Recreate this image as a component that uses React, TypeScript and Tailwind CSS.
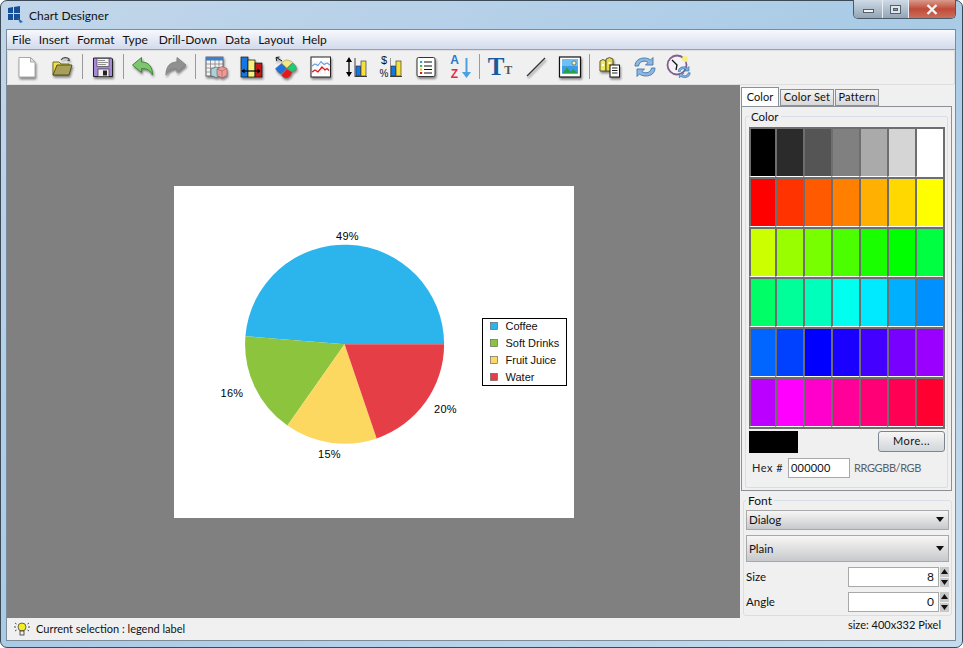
import React from "react";

const sans = "[font-family:'Lato','Open_Sans',sans-serif]";

const shadow = "drop-shadow-[1px_2px_1px_rgba(0,0,0,0.45)]";

function Ico({ children, cls = shadow }: { children: React.ReactNode; cls?: string }) {
  return (
    <svg width="24" height="24" viewBox="0 0 24 24" className={cls}>
      {children}
    </svg>
  );
}

const IconNew = () => (
  <Ico>
    <path d="M4 2.5h11.5l4.5 4.5v15H4z" fill="#fff" stroke="#a8a8a8" />
    <path d="M15.5 2.5v4.5h4.5z" fill="#e4e4e4" stroke="#a8a8a8" />
  </Ico>
);
const IconOpen = () => (
  <Ico>
    <path d="M3 7h6l2 2h8v11H3z" fill="#f5e04a" stroke="#6e6a20" />
    <path d="M3 20l4-10h15l-3 10z" fill="#a6a05a" stroke="#55521c" />
    <path d="M11 5c2-3 6-3 8-1" fill="none" stroke="#444" strokeWidth="1.2" />
    <path d="M20 6l-3-.2 2.4-2.4z" fill="#444" />
  </Ico>
);
const IconSave = () => (
  <Ico>
    <path d="M2.5 3h18l1 1v17.500h-19z" fill="#a888d8" stroke="#222" />
    <rect x="6" y="3.500" width="12" height="8" fill="#f4f4f4" stroke="#444" strokeWidth="0.7" />
    <path d="M7 5.500h7M7 7.500h10M7 9.500h8" stroke="#777" strokeWidth="0.8" />
    <rect x="7" y="14" width="11" height="7.500" fill="#f0f0f0" stroke="#333" strokeWidth="0.7" />
    <rect x="12" y="15.500" width="4" height="5" fill="#222" />
  </Ico>
);
const IconUndo = () => (
  <Ico>
    <path d="M1.500 10l9-7.500v4.500c7 0 11 4.500 11 13-2.500-5-5.500-6.500-11-6.500v4z" fill="#7fc46e" stroke="#3f8a3a" />
  </Ico>
);
const IconRedo = () => (
  <Ico>
    <path d="M22 10l-9-7.500v4.500c-7 0-11 4.500-11 13 2.500-5 5.500-6.500 11-6.500v4z" fill="#909090" stroke="#858585" />
  </Ico>
);
const IconTable = () => (
  <Ico>
    <rect x="2" y="2" width="17" height="19" fill="#f3f3f3" stroke="#666" />
    <rect x="2" y="2" width="17" height="3.500" fill="#3c7fd0" />
    <path d="M2 9h17M2 13h17M2 17h17M6.500 5v16M11 5v16M15 5v16" stroke="#777" strokeWidth="0.7" />
    <path d="M7 14l5-2 5 1.500v7l-5 2-5-2z" fill="#a8d4d4" stroke="#557" strokeWidth="0.6" />
    <path d="M13 14l5-2.500 5 2v7l-5 2.500-5-2.500z" fill="#ee9a9a" stroke="#855" strokeWidth="0.6" />
    <path d="M13 14l5 2 5-2.500M18 16v7.500" stroke="#855" strokeWidth="0.5" fill="none" />
  </Ico>
);
const IconBars = () => (
  <Ico>
    <rect x="2" y="2" width="7" height="20" fill="#1478e0" stroke="#111" strokeWidth="0.7" />
    <rect x="9" y="5" width="7" height="17" fill="#f5f080" stroke="#111" strokeWidth="0.7" />
    <rect x="16" y="8" width="7" height="14" fill="#c01818" stroke="#111" strokeWidth="0.7" />
    <path d="M3 16h18" stroke="#000" strokeWidth="1.200" />
    <path d="M2.500 16l3-2.500v5zM21.500 16l-3-2.500v5z" fill="#000" />
  </Ico>
);
const IconPie = () => (
  <Ico>
    <path d="M12 5c3 0 5 1 6.500 2.500L13 13l-1-.5L7.500 8 11 5.200z" fill="#f3e878" stroke="#666" strokeWidth="0.4" />
    <path d="M13.500 13.500L19 8c2.500 2 3.500 4 3.500 6l-4 3z" fill="#18d070" stroke="#666" strokeWidth="0.4" />
    <path d="M7.500 8.500L12.500 13.500 7 19c-3-1.500-5-4-5.500-5.500z" fill="#2070e0" stroke="#666" strokeWidth="0.4" />
    <path d="M13 14l5 3.500c-1.500 4-4 5.500-6 5.500s-3.500-1-4.500-3z" fill="#e81818" stroke="#666" strokeWidth="0.4" />
    <path d="M8 6L2.500 2.500M2 2.500l3.500-.5M2 2.500l.8 3.500" stroke="#111" strokeWidth="1" fill="none" />
  </Ico>
);
const IconLine = () => (
  <Ico>
    <rect x="2" y="2" width="19.500" height="20" fill="#fff" stroke="#222" />
    <path d="M4 6v13M8 6v13M12 6v13M16 6v13M20 6v13" stroke="#d8d8d8" strokeWidth="0.6" />
    <path d="M3 11l3-2 3 1.500 3-4 3 3 3-1.500 3 2" fill="none" stroke="#6aa0e0" strokeWidth="1.100" />
    <path d="M3 17l3-2 3 2 4-5 3 3 2-1.500 2 2" fill="none" stroke="#e01818" strokeWidth="1.300" />
  </Ico>
);
const IconAxis = () => (
  <Ico cls="">
    <path d="M5 5v14" stroke="#000" strokeWidth="1.300" />
    <path d="M5 2L2 7h6zM5 22l-3-5h6z" fill="#000" />
    <path d="M11 3v19M11 21.500h12" stroke="#444" strokeWidth="1" />
    <rect x="12" y="11" width="4.500" height="10" fill="#1478e0" stroke="#222" strokeWidth="0.6" />
    <rect x="17" y="6" width="5" height="15" fill="#f5e040" stroke="#222" strokeWidth="0.6" />
  </Ico>
);
const IconMoney = () => (
  <div className="w-[24px] h-[24px] flex items-center">
    <div className="w-[11px] flex flex-col items-center text-[#111] [font-family:'Liberation_Sans',sans-serif] text-[11px] leading-[13px]">
      <span>$</span>
      <span className="text-[10px]">%</span>
    </div>
    <svg width="13" height="24" viewBox="11 0 13 24">
      <path d="M11 3v19M11 21.500h12" stroke="#444" strokeWidth="1" />
      <rect x="12" y="11" width="4.500" height="10" fill="#1478e0" stroke="#222" strokeWidth="0.6" />
      <rect x="17" y="6" width="5" height="15" fill="#f5e040" stroke="#222" strokeWidth="0.6" />
    </svg>
  </div>
);
const IconList = () => (
  <Ico>
    <rect x="3" y="2.500" width="18" height="19" rx="1.500" fill="#fff" stroke="#333" />
    <rect x="6" y="6" width="2.200" height="2" fill="#2ea0d8" />
    <rect x="6" y="10" width="2.200" height="2" fill="#48b048" />
    <rect x="6" y="13.500" width="2.200" height="2" fill="#e8c020" />
    <rect x="6" y="17" width="2.200" height="2" fill="#d02020" />
    <path d="M10 7h8M10 11h8M10 14.500h8M10 18h8" stroke="#111" strokeWidth="1.200" />
  </Ico>
);
const IconAZ = () => (
  <div className="w-[24px] h-[24px] flex items-center">
    <div className="w-[14px] flex flex-col items-center font-bold text-[12px] leading-[14px] [font-family:'Liberation_Sans',sans-serif]">
      <span className="text-[#2a78c8]">A</span>
      <span className="text-[#e82848]">Z</span>
    </div>
    <svg width="10" height="24" viewBox="14 0 10 24">
      <path d="M18.500 3v16" stroke="#4aa0e0" strokeWidth="2" />
      <path d="M18.500 23l-4.500-6h9z" fill="#4aa0e0" />
    </svg>
  </div>
);
const IconText = () => (
  <div className="flex items-end h-[24px] font-bold [font-family:'Liberation_Serif',serif]">
    <span className="text-[25px] leading-[24px] text-[#1a5a9c]">T</span>
    <span className="text-[12px] leading-[14px] text-[#555] mb-[2px]">T</span>
  </div>
);
const IconStroke = () => (
  <Ico>
    <path d="M3 21L21 3" stroke="#333" strokeWidth="1.300" />
  </Ico>
);
const IconImage = () => (
  <Ico>
    <rect x="1.500" y="2" width="21" height="20" fill="#fff" stroke="#111" strokeWidth="1.200" />
    <rect x="4" y="4" width="16" height="14.500" fill="#3c9ce8" />
    <rect x="4" y="4" width="16" height="7" fill="#6cc0f4" />
    <circle cx="16" cy="8" r="2" fill="#f8f4c0" stroke="#333" strokeWidth="0.5" />
    <path d="M4 18.500l5-6 3.500 4 2.500-2.500 5 4.500z" fill="#28a048" />
  </Ico>
);
const IconData = () => (
  <Ico>
    <path d="M2 6l3-1.500L8 6v10H2z" fill="#f0e860" stroke="#333" strokeWidth="0.8" />
    <path d="M8 4l3.500-1.500L15 4v12H8z" fill="#e8d848" stroke="#333" strokeWidth="0.8" />
    <rect x="4" y="9" width="2" height="2" fill="#fff" />
    <rect x="10.500" y="7" width="2" height="2" fill="#fff" />
    <rect x="12" y="10" width="9.500" height="12" fill="#fff" stroke="#111" />
    <path d="M14 13h5.500M14 15.500h5.500M14 18h5.500" stroke="#222" strokeWidth="1" />
  </Ico>
);
const IconRefresh = () => (
  <svg width="24" height="24" viewBox="0 0 24 24">
    <path d="M2 11c0-5 4-8 9-8 3 0 5 .8 6.500 2L20 2.500V10h-7.500l2.500-2.500c-1-1-2.500-1.300-4-1.300-3 0-5 2-5.500 4.800z" fill="#8fb6dc" stroke="#3f78b0" strokeWidth="0.9" />
    <path d="M22 13c0 5-4 8-9 8-3 0-5-.8-6.500-2L4 21.500V14h7.500L9 16.500c1 1 2.500 1.300 4 1.300 3 0 5-2 5.500-4.800z" fill="#8fb6dc" stroke="#3f78b0" strokeWidth="0.9" />
  </svg>
);
const IconClock = () => (
  <svg width="26" height="26" viewBox="0 0 26 26">
    <circle cx="11" cy="11" r="9.500" fill="#f4f2f6" stroke="#80608c" strokeWidth="1.800" />
    <path d="M6 6l5 5-1 5" fill="none" stroke="#111" strokeWidth="1.300" />
    <circle cx="19" cy="5" r="3" fill="#f4f080" />
    <g transform="translate(11 11) scale(0.6)">
      <path d="M2 11c0-5 4-8 9-8 3 0 5 .8 6.500 2L20 2.500V10h-7.500l2.500-2.500c-1-1-2.500-1.300-4-1.300-3 0-5 2-5.500 4.800z" fill="#7fb0dc" stroke="#2f6aa8" />
      <path d="M22 13c0 5-4 8-9 8-3 0-5-.8-6.500-2L4 21.500V14h7.500L9 16.500c1 1 2.500 1.300 4 1.300 3 0 5-2 5.500-4.800z" fill="#7fb0dc" stroke="#2f6aa8" />
    </g>
  </svg>
);

function Btn({ w = "w-[35px]", children }: { w?: string; children: React.ReactNode }) {
  return <div className={`${w} h-full flex items-center justify-center shrink-0`}>{children}</div>;
}
const Sep = () => (
  <div className="w-[6px] h-full flex items-center justify-center shrink-0">
    <div className="w-px h-[25px] bg-[#9a9a9a]" />
  </div>
);

const rows = [
  ["#000000", "#2b2b2b", "#555555", "#808080", "#aaaaaa", "#d5d5d5", "#ffffff"],
  ["#ff0000", "#ff3300", "#ff5a00", "#ff8000", "#ffb000", "#ffd800", "#ffff00"],
  ["#ccff00", "#99ff00", "#77ff00", "#4cff00", "#1aff00", "#00ff00", "#00ff40"],
  ["#00ff66", "#00ff99", "#00ffbb", "#00ffee", "#00eaff", "#00b0ff", "#0090ff"],
  ["#0066ff", "#0040ff", "#0000ff", "#1a00ff", "#4400ff", "#7700ff", "#9900ff"],
  ["#bb00ff", "#ff00ff", "#ff00cc", "#ff0099", "#ff0077", "#ff0055", "#ff0030"],
];

const legend = [
  { c: "#2cb5ec", t: "Coffee", y: 140 },
  { c: "#8cc43e", t: "Soft Drinks", y: 157 },
  { c: "#fdd860", t: "Fruit Juice", y: 174 },
  { c: "#e53e46", t: "Water", y: 191 },
];

function pt(deg: number) {
  const r = 99.5;
  const a = (deg * Math.PI) / 180;
  return `${170.6 + r * Math.cos(a)} ${158.2 - r * Math.sin(a)}`;
}
function slice(a: number, b: number) {
  return `M170.6 158.200L${pt(a)}A99.500 99.500 0 ${b - a > 180 ? 1 : 0} 0 ${pt(b)}Z`;
}

function Chart() {
  const font = { fontFamily: "Liberation Sans", fontSize: 11 };
  return (
    <div className="w-[400px] h-[332px] bg-white shrink-0">
      <svg width="400" height="332" viewBox="0 0 400 332">
        <path d={slice(0, 175.4)} fill="#2cb5ec" />
        <path d={slice(175.4, 234.9)} fill="#8cc43e" />
        <path d={slice(234.9, 288.8)} fill="#fdd860" />
        <path d={slice(288.8, 360)} fill="#e53e46" />
        <text x="173.500" y="54" textAnchor="middle" letterSpacing="0.3" {...font}>49%</text>
        <text x="58" y="211" textAnchor="middle" letterSpacing="0.3" {...font}>16%</text>
        <text x="271.500" y="227" textAnchor="middle" letterSpacing="0.3" {...font}>20%</text>
        <text x="155.500" y="272" textAnchor="middle" letterSpacing="0.3" {...font}>15%</text>
        <rect x="308.500" y="132.500" width="84" height="67" fill="#fff" stroke="#000" />
        {legend.map((l) => (
          <g key={l.t}>
            <rect x="316.500" y={l.y - 3.5} width="7" height="7" fill={l.c} stroke="#555" strokeWidth="0.6" />
            <text x="331.500" y={l.y + 4} fill="#111" {...font}>{l.t}</text>
          </g>
        ))}
      </svg>
    </div>
  );
}

function Combo({ label, h }: { label: string; h: string }) {
  return (
    <div className={`${h} w-[203px] mx-[2px] border border-[#a8a8a8] bg-gradient-to-b from-[#f6f6f6] via-[#e0e0e0] to-[#c6c9cc] flex items-center justify-between px-[2px] text-[11.500px] text-[#111]`}>
      <span>{label}</span>
      <svg width="10" height="6" viewBox="0 0 10 6" className="mr-[1px]"><path d="M1 0h8L5 5z" fill="#111" /></svg>
    </div>
  );
}

function Spin({ label, value }: { label: string; value: string }) {
  return (
    <div className="flex items-center h-[20px] text-[11.500px] text-[#111]">
      <span className="w-[102px]">{label}</span>
      <div className="w-[91px] h-[20px] bg-white border border-[#a8a8a8] flex items-center justify-end pr-[4px] text-[12px]">{value}</div>
      <div className="w-[9px] ml-[1px] h-[20px] flex flex-col gap-px">
        <div className="flex-1 bg-[#c8c8c8] flex items-center justify-center">
          <svg width="7" height="5" viewBox="0 0 7 5"><path d="M3.500 0L7 5H0z" fill="#111" /></svg>
        </div>
        <div className="flex-1 bg-[#c8c8c8] flex items-center justify-center">
          <svg width="7" height="5" viewBox="0 0 7 5"><path d="M0 0h7L3.500 5z" fill="#111" /></svg>
        </div>
      </div>
    </div>
  );
}

export default function App() {
  return (
    <div className={`w-[963px] h-[648px] overflow-hidden bg-white ${sans}`}>
      <div className="w-full h-full rounded-[7px] border border-[#3c4a58] bg-gradient-to-br from-[#c2d6ea] via-[#a9cbe6] to-[#c5dcee] flex flex-col pl-[5px] pr-[6px] pb-[6px]">
        <div className="h-[28px] flex items-start shrink-0">
          <div className="flex items-center gap-[5px] pt-[5px] pl-px">
            <svg width="17" height="17" viewBox="0 0 17 17">
              <path d="M1 2l5-1v6H1zM7 1l6-1v7H7zM1 8h5v6H1zM7 8h6v6H7z" fill="#164f96" />
              <path d="M10 11l6 5-3 1z" fill="#2f6ab0" />
            </svg>
            <span className="text-[12px] text-[#111] leading-none pt-[2px]">Chart Designer</span>
          </div>
          <div className="ml-auto flex h-[19px] mt-[-1px] border border-[#4a5a68] border-t-0 rounded-b-[5px] overflow-hidden">
            <div className="w-[29px] bg-gradient-to-b from-[#cfdbe6] to-[#93a5b6] flex items-center justify-center border-r border-[#e8eef4]">
              <div className="w-[11px] h-[4px] bg-[#f4f4f4] border border-[#56606a] mt-[4px]" />
            </div>
            <div className="w-[26px] bg-gradient-to-b from-[#cfdbe6] to-[#93a5b6] flex items-center justify-center border-r border-[#e8eef4]">
              <div className="w-[11px] h-[9px] border border-[#56606a] bg-[#dfe6ec] flex items-center justify-center">
                <div className="w-[5px] h-[3px] bg-[#8a9aa8] border border-[#56606a]" />
              </div>
            </div>
            <div className="w-[46px] bg-gradient-to-b from-[#d89a8c] via-[#c04a38] to-[#c8705c] flex items-center justify-center">
              <svg width="12" height="11" viewBox="0 0 12 11">
                <path d="M1.500 1L10.500 10M10.500 1L1.500 10" stroke="#f4f4f4" strokeWidth="2.400" />
              </svg>
            </div>
          </div>
        </div>

        <div className="flex-1 flex flex-col min-h-0 border border-[#7d8a98] bg-[#f0f0f0]">
          <div className="h-[20px] shrink-0 bg-gradient-to-b from-[#f8f9fc] to-[#d3daec] border-b border-[#a0a0a8] flex items-center pl-[5px] gap-[8px] text-[12px] text-[#111]">
            <span>File</span>
            <span>Insert</span>
            <span>Format</span>
            <span className="mr-[3px]">Type</span>
            <span>Drill-Down</span>
            <span>Data</span>
            <span>Layout</span>
            <span>Help</span>
          </div>
          <div className="h-[35px] shrink-0 flex items-center pl-px pb-[2px] border border-[#dedede] rounded-[2px]">
            <Btn><IconNew /></Btn>
            <Btn><IconOpen /></Btn>
            <Sep />
            <Btn><IconSave /></Btn>
            <Sep />
            <Btn w="w-[34px]"><IconUndo /></Btn>
            <Btn w="w-[32px]"><IconRedo /></Btn>
            <Sep />
            <Btn><IconTable /></Btn>
            <Btn><IconBars /></Btn>
            <Btn><IconPie /></Btn>
            <Btn><IconLine /></Btn>
            <Btn><IconAxis /></Btn>
            <Btn><IconMoney /></Btn>
            <Btn><IconList /></Btn>
            <Btn w="w-[33px]"><IconAZ /></Btn>
            <Sep />
            <Btn w="w-[36px]"><IconText /></Btn>
            <Btn><IconStroke /></Btn>
            <Btn w="w-[33px]"><IconImage /></Btn>
            <Sep />
            <Btn w="w-[36px]"><IconData /></Btn>
            <Btn w="w-[34px]"><IconRefresh /></Btn>
            <Btn w="w-[34px]"><IconClock /></Btn>
          </div>

          <div className="flex-1 flex min-h-0">
            <div className="w-[733px] shrink-0 bg-[#808080] flex items-center justify-center">
              <Chart />
            </div>
            <div className="flex-1 flex flex-col min-w-0 pt-[2px] pl-px">
              <div className="h-[19px] flex items-end text-[11px] text-[#111] relative z-10">
                <div className="w-[38px] h-[19px] bg-white border border-b-0 border-[#8a8f98] flex items-center justify-center">Color</div>
                <div className="w-[54px] h-[17px] ml-px bg-gradient-to-b from-[#f4f4f4] to-[#d8d8d8] border border-[#8a8f98] flex items-center justify-center tracking-[0.2px]">Color Set</div>
                <div className="w-[44px] h-[17px] ml-px bg-gradient-to-b from-[#f4f4f4] to-[#d8d8d8] border border-[#8a8f98] flex items-center justify-center tracking-[0.2px]">Pattern</div>
              </div>
              <div className="w-[211px] h-[385px] border border-[#8a8f98] bg-[#f0f0f0] px-[3px] pt-[3px] shrink-0">
                <fieldset className="h-[378px] border border-[#d6dee8] rounded-[2px] pl-[3px] pt-0">
                  <legend className="px-[2px] text-[11.500px] text-[#111] leading-[13px]">Color</legend>
                  <div className="w-[196px] border-r-2 border-b-2 border-[#6e6e6e] grid grid-cols-[26px_repeat(6,28px)] mt-[4px]">
                    {rows.flat().map((c, i) => (
                      <div key={i} className="h-[50px] border-l-2 border-t-2 border-b border-[#6e6e6e] border-b-white" style={{ backgroundColor: c }} />
                    ))}
                  </div>
                  <div className="flex justify-between items-start w-[196px] mt-[2px]">
                    <div className="w-[49px] h-[22px] bg-black" />
                    <div className="w-[67px] h-[21px] border border-[#7d8690] rounded-[3px] bg-gradient-to-b from-[#f6f6f6] to-[#d2d6da] flex items-center justify-center text-[11px] text-[#111] tracking-[0.5px]">More...</div>
                  </div>
                  <div className="flex items-center mt-[5px] h-[20px] pl-[3px] text-[11px]">
                    <span className="w-[36px] text-[#222] tracking-[0.5px]">Hex #</span>
                    <div className="w-[62px] h-[20px] bg-white border border-[#a8a8a8] pl-[2px] flex items-center text-[#111] tracking-[0.2px]">000000</div>
                    <span className="ml-[4px] text-[#5a6068] tracking-[-0.4px]">RRGGBB/RGB</span>
                  </div>
                </fieldset>
              </div>
              <fieldset className="w-[207px] h-[122px] border border-[#d6dee8] rounded-[3px] ml-[2px] mt-[3px] pt-[3px] shrink-0">
                <legend className="ml-[2px] px-[2px] text-[12px] text-[#111] leading-[13px]">Font</legend>
                <div className="flex flex-col">
                  <Combo label="Dialog" h="h-[20px]" />
                  <div className="h-[5px]" />
                  <Combo label="Plain" h="h-[27px]" />
                  <div className="h-[5px]" />
                  <div className="pl-[2px]"><Spin label="Size" value="8" /></div>
                  <div className="h-[5px]" />
                  <div className="pl-[2px]"><Spin label="Angle" value="0" /></div>
                </div>
              </fieldset>
            </div>
          </div>

          <div className="h-[22px] shrink-0 flex items-center justify-between text-[11px] text-[#111] pl-[7px] pr-[14px]">
            <div className="flex items-center gap-[6px]">
              <svg width="16" height="16" viewBox="0 0 16 16">
                <circle cx="8" cy="6" r="4" fill="#f4ee20" stroke="#444" strokeWidth="0.8" />
                <rect x="6" y="10" width="4" height="4" fill="#eee" stroke="#333" strokeWidth="0.8" />
                <path d="M1 2l1.500 1M0 6h2M1 10l1.500-1M15 2l-1.500 1M16 6h-2M15 10l-1.500-1" stroke="#222" strokeWidth="0.8" />
              </svg>
              <span>Current selection : legend label</span>
            </div>
            <span className="mt-[-8px]">size: 400x332 Pixel</span>
          </div>
        </div>
      </div>
    </div>
  );
}
